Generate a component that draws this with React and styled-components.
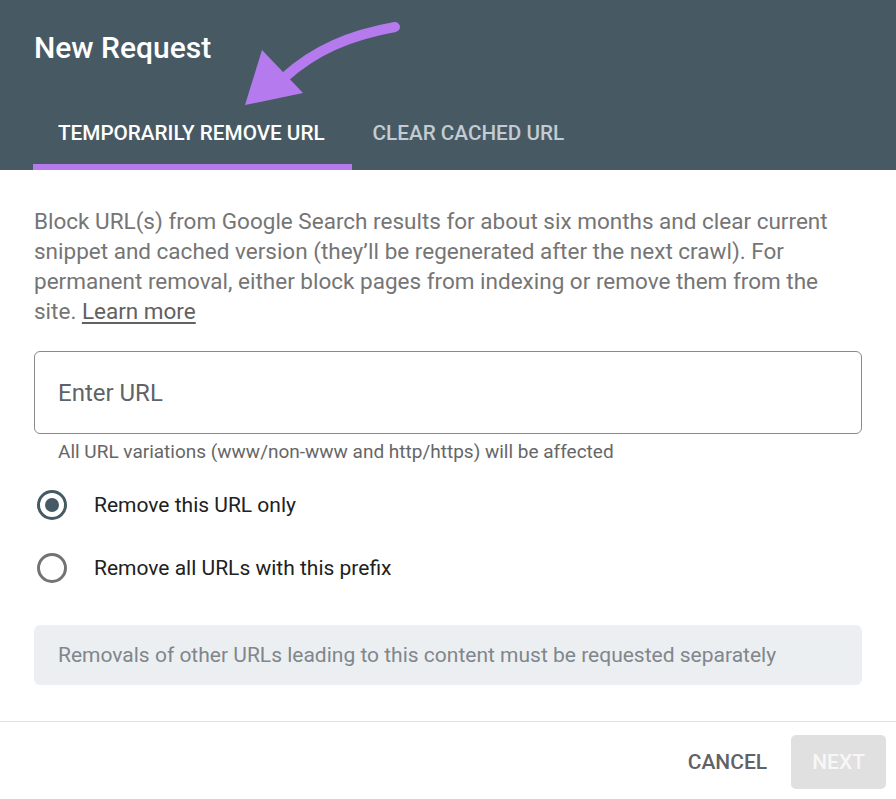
import React from "react";
import styled, { createGlobalStyle } from "styled-components";

const Global = createGlobalStyle`
  html, body { margin: 0; padding: 0; background: #ffffff; }
  body { font-family: Roboto, "Noto Sans", Arial, sans-serif; }
  * { box-sizing: border-box; }
`;

const Dialog = styled.div`
  width: 896px;
  height: 799px;
  display: flex;
  flex-direction: column;
  background: #ffffff;
  overflow: hidden;
`;

const Header = styled.header`
  position: relative;
  background: #475a64;
  padding: 30px 0 0 33px;
  height: 170px;
  display: flex;
  flex-direction: column;
  justify-content: space-between;
`;

const Title = styled.h1`
  margin: 0 0 0 1px;
  font-size: 30px;
  font-weight: 500;
  color: #ffffff;
  line-height: 36px;
`;

const Tabs = styled.div`
  display: flex;
  align-items: stretch;
  height: 68px;
`;

const Tab = styled.div`
  display: flex;
  align-items: center;
  padding: ${(p) => (p.$active ? "0 27px 0 25px" : "0 21px")};
  font-size: 20.7px;
  font-weight: 500;
  text-transform: uppercase;
  color: ${(p) => (p.$active ? "#ffffff" : "#c3ccd2")};
  border-bottom: 6px solid ${(p) => (p.$active ? "#b57bee" : "transparent")};
`;

const Arrow = styled.svg`
  position: absolute;
  left: 230px;
  top: 15px;
`;

const Body = styled.main`
  padding: 36px 34px 0 34px;
  flex: 1;
  display: flex;
  flex-direction: column;
`;

const Intro = styled.p`
  margin: 0;
  max-width: 805px;
  font-size: 22.5px;
  line-height: 30px;
  color: #757575;
`;

const Link = styled.a`
  color: #616161;
  text-decoration: underline;
  text-underline-offset: 3px;
`;

const Field = styled.div`
  margin-top: 25px;
  height: 83px;
  border: 1.5px solid #8a8a8a;
  border-radius: 6px;
  display: flex;
  align-items: center;
  padding-left: 23px;
  font-size: 24px;
  color: #5f6368;
`;

const Helper = styled.div`
  margin-top: 8px;
  padding-left: 24px;
  font-size: 19px;
  line-height: 20px;
  color: #666666;
`;

const Options = styled.div`
  margin-top: 28px;
  display: flex;
  flex-direction: column;
  gap: 33px;
`;

const Option = styled.label`
  display: flex;
  align-items: center;
  gap: 27px;
  font-size: 21px;
  line-height: 30px;
  color: #212121;
`;

const Radio = styled.span`
  width: 30px;
  height: 30px;
  margin-left: 3px;
  border-radius: 50%;
  border: 3px solid ${(p) => (p.$checked ? "#455a64" : "#737373")};
  display: flex;
  align-items: center;
  justify-content: center;
  &::after {
    content: "";
    width: 14px;
    height: 14px;
    border-radius: 50%;
    background: ${(p) => (p.$checked ? "#455a64" : "transparent")};
  }
`;

const Note = styled.div`
  margin-top: 42px;
  height: 60px;
  border-radius: 6px;
  background: #eceff1;
  display: flex;
  align-items: center;
  padding-left: 24px;
  font-size: 21px;
  color: #80868b;
`;

const Footer = styled.footer`
  margin-top: auto;
  height: 78px;
  border-top: 1.5px solid #e0e0e0;
  display: flex;
  align-items: center;
  justify-content: flex-end;
  gap: 24px;
  padding-right: 10px;
`;

const Button = styled.button`
  font-family: Roboto, Arial, sans-serif;
  font-size: 21px;
  font-weight: 500;
  text-transform: uppercase;
  border: none;
  border-radius: 5px;
  height: 54px;
  padding: 0 ${(p) => (p.$filled ? "21px" : "0")};
  background: ${(p) => (p.$filled ? "#e0e0e0" : "transparent")};
  color: ${(p) => (p.$filled ? "#f7f7f7" : "#5f6368")};
  margin-top: 2px;
`;

export default function App() {
  return (
    <>
      <Global />
      <Dialog>
        <Header>
          <Title>New Request</Title>
          <Tabs>
            <Tab $active>Temporarily remove URL</Tab>
            <Tab>Clear cached URL</Tab>
          </Tabs>
          <Arrow width="180" height="100" viewBox="0 0 180 100">
            <path
              d="M165 12 C 120 20, 85 35, 55 62"
              fill="none"
              stroke="#b57bee"
              strokeWidth="10"
              strokeLinecap="round"
            />
            <polygon points="32,35 15,90 73,78" fill="#b57bee" />
          </Arrow>
        </Header>
        <Body>
          <Intro>
            Block URL(s) from Google Search results for about six months and clear current
            snippet and cached version (they’ll be regenerated after the next crawl). For
            permanent removal, either block pages from indexing or remove them from the
            site. <Link>Learn more</Link>
          </Intro>
          <Field>Enter URL</Field>
          <Helper>All URL variations (www/non-www and http/https) will be affected</Helper>
          <Options>
            <Option>
              <Radio $checked />
              Remove this URL only
            </Option>
            <Option>
              <Radio />
              Remove all URLs with this prefix
            </Option>
          </Options>
          <Note>Removals of other URLs leading to this content must be requested separately</Note>
        </Body>
        <Footer>
          <Button>Cancel</Button>
          <Button $filled>Next</Button>
        </Footer>
      </Dialog>
    </>
  );
}
